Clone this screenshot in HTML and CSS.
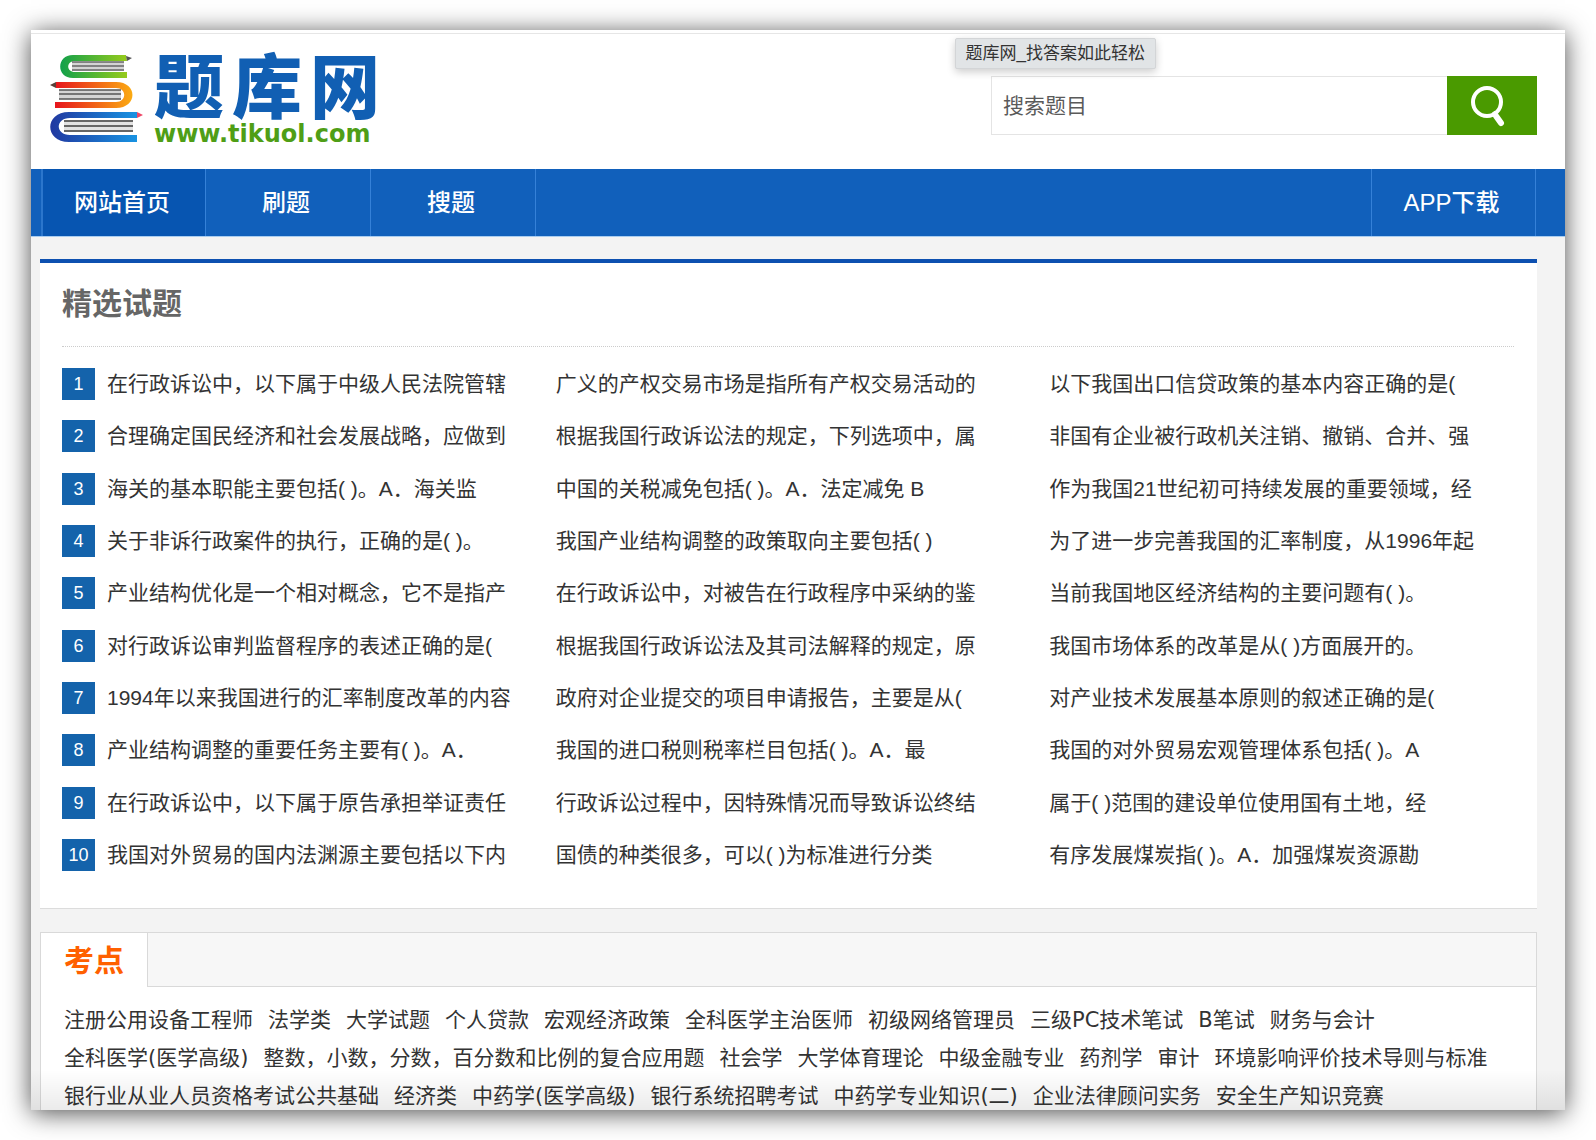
FILE: index.html
```html
<!DOCTYPE html>
<html lang="zh-CN">
<head>
<meta charset="utf-8">
<meta name="viewport" content="width=device-width, initial-scale=1">
<title>题库网_找答案如此轻松</title>
<link rel="stylesheet" href="styles.css">
</head>
<body>
<div class="window">
  <header class="header">
    <a class="logo" href="#">
      <svg class="logo-books" viewBox="0 0 96 90" width="96" height="90" aria-hidden="true">
        <defs>
          <linearGradient id="green" x1="0" x2="1"><stop offset="0" stop-color="#12a04a"/><stop offset="1" stop-color="#96cb1c"/></linearGradient>
          <linearGradient id="red" x1="0" x2="1"><stop offset="0" stop-color="#e6141c"/><stop offset="1" stop-color="#fbab12"/></linearGradient>
          <linearGradient id="blue" x1="0" x2="1"><stop offset="0" stop-color="#2138a0"/><stop offset="1" stop-color="#1893e2"/></linearGradient>
        </defs>
        <path fill="url(#green)" d="M77 0H24C7 0 7 23 24 23H78V17H26C17 17 17 6 26 6H78Z"/>
        <path fill="#555" d="M77 1L83 3L78 6Z"/>
        <path fill="#d4d4d4" d="M23 7H75V16H23Z"/>
        <path stroke="#666" stroke-width="1.5" d="M23 7H75M23 11H75M23 15H75"/>
        <path fill="url(#red)" d="M7 27H67C89 27 89 53 67 53H6V47H67C78 47 78 33 67 33H7Z"/>
        <path fill="#5a4038" d="M7 27L1 30L7 33Z"/>
        <path fill="#d4d4d4" d="M10 35H72V44H10Z"/>
        <path stroke="#555" stroke-width="1.5" d="M10 35H72M10 39H72M10 44H72"/>
        <path fill="url(#blue)" d="M88 57H20C-5 57-5 87 20 87H88V80H21C6 80 6 63 21 63H88Z"/>
        <path fill="#ee4868" d="M88 57L94 60L88 63Z"/>
        <path fill="#e2e2e2" d="M15 66H84V77H15Z"/>
        <path stroke="#666" stroke-width="1.8" d="M15 66H84M15 71H84M15 76H84"/>
      </svg>
      <span class="logo-words">
        <span class="logo-name"><span>题</span><span>库</span><span>网</span></span>
        <span class="logo-domain">www.tikuol.com</span>
      </span>
    </a>
    <form class="search">
      <input class="search-input" type="text" placeholder="搜索题目" aria-label="搜索题目">
      <button class="search-button" type="button" aria-label="搜索">
        <svg viewBox="0 0 36 44" width="36" height="44" aria-hidden="true">
          <circle cx="17" cy="18" r="14" fill="none" stroke="#fff" stroke-width="4"/>
          <path d="M26 32L31 39" stroke="#fff" stroke-width="6" stroke-linecap="round"/>
          <path d="M23 28L26 32" stroke="#fff" stroke-width="4"/>
        </svg>
      </button>
    </form>
    <div class="tooltip" role="tooltip">题库网_找答案如此轻松</div>
  </header>

  <nav class="nav">
    <a class="nav-item nav-item-active" href="#">网站首页</a>
    <a class="nav-item" href="#">刷题</a>
    <a class="nav-item" href="#">搜题</a>
    <a class="nav-item nav-item-app" href="#">APP下载</a>
  </nav>

  <main class="main">
    <section class="featured">
      <h2 class="featured-title">精选试题</h2>
      <ol class="rows">
        <li class="row"><span class="cell"><span class="badge">1</span><a href="#">在行政诉讼中，以下属于中级人民法院管辖</a></span><a href="#">广义的产权交易市场是指所有产权交易活动的</a><a href="#">以下我国出口信贷政策的基本内容正确的是(</a></li>
        <li class="row"><span class="cell"><span class="badge">2</span><a href="#">合理确定国民经济和社会发展战略，应做到</a></span><a href="#">根据我国行政诉讼法的规定，下列选项中，属</a><a href="#">非国有企业被行政机关注销、撤销、合并、强</a></li>
        <li class="row"><span class="cell"><span class="badge">3</span><a href="#">海关的基本职能主要包括( )。A．海关监</a></span><a href="#">中国的关税减免包括( )。A．法定减免 B</a><a href="#">作为我国21世纪初可持续发展的重要领域，经</a></li>
        <li class="row"><span class="cell"><span class="badge">4</span><a href="#">关于非诉行政案件的执行，正确的是( )。</a></span><a href="#">我国产业结构调整的政策取向主要包括( )</a><a href="#">为了进一步完善我国的汇率制度，从1996年起</a></li>
        <li class="row"><span class="cell"><span class="badge">5</span><a href="#">产业结构优化是一个相对概念，它不是指产</a></span><a href="#">在行政诉讼中，对被告在行政程序中采纳的鉴</a><a href="#">当前我国地区经济结构的主要问题有( )。</a></li>
        <li class="row"><span class="cell"><span class="badge">6</span><a href="#">对行政诉讼审判监督程序的表述正确的是(</a></span><a href="#">根据我国行政诉讼法及其司法解释的规定，原</a><a href="#">我国市场体系的改革是从( )方面展开的。</a></li>
        <li class="row"><span class="cell"><span class="badge">7</span><a href="#">1994年以来我国进行的汇率制度改革的内容</a></span><a href="#">政府对企业提交的项目申请报告，主要是从(</a><a href="#">对产业技术发展基本原则的叙述正确的是(</a></li>
        <li class="row"><span class="cell"><span class="badge">8</span><a href="#">产业结构调整的重要任务主要有( )。A．</a></span><a href="#">我国的进口税则税率栏目包括( )。A．最</a><a href="#">我国的对外贸易宏观管理体系包括( )。A</a></li>
        <li class="row"><span class="cell"><span class="badge">9</span><a href="#">在行政诉讼中，以下属于原告承担举证责任</a></span><a href="#">行政诉讼过程中，因特殊情况而导致诉讼终结</a><a href="#">属于( )范围的建设单位使用国有土地，经</a></li>
        <li class="row"><span class="cell"><span class="badge">10</span><a href="#">我国对外贸易的国内法渊源主要包括以下内</a></span><a href="#">国债的种类很多，可以( )为标准进行分类</a><a href="#">有序发展煤炭指( )。A．加强煤炭资源勘</a></li>
      </ol>
    </section>

    <section class="topics">
      <div class="tabs"><h2 class="tab">考点</h2></div>
      <div class="topic-list">
        <a href="#">注册公用设备工程师</a>
        <a href="#">法学类</a>
        <a href="#">大学试题</a>
        <a href="#">个人贷款</a>
        <a href="#">宏观经济政策</a>
        <a href="#">全科医学主治医师</a>
        <a href="#">初级网络管理员</a>
        <a href="#">三级PC技术笔试</a>
        <a href="#">B笔试</a>
        <a href="#">财务与会计</a>
        <a href="#">全科医学(医学高级)</a>
        <a href="#">整数，小数，分数，百分数和比例的复合应用题</a>
        <a href="#">社会学</a>
        <a href="#">大学体育理论</a>
        <a href="#">中级金融专业</a>
        <a href="#">药剂学</a>
        <a href="#">审计</a>
        <a href="#">环境影响评价技术导则与标准</a>
        <a href="#">银行业从业人员资格考试公共基础</a>
        <a href="#">经济类</a>
        <a href="#">中药学(医学高级)</a>
        <a href="#">银行系统招聘考试</a>
        <a href="#">中药学专业知识(二)</a>
        <a href="#">企业法律顾问实务</a>
        <a href="#">安全生产知识竞赛</a>
      </div>
    </section>
  </main>
</div>
</body>
</html>
```
FILE: styles.css
```css
* {
  box-sizing: border-box;
}

body {
  margin: 0;
  padding: 30px 31px;
  background: #fff;
  color: #333;
  font-family: "Liberation Sans", "Noto Sans CJK SC", sans-serif;
  font-size: 21px;
}

a {
  color: inherit;
  text-decoration: none;
}

h2,
ol {
  margin: 0;
  padding: 0;
}

.window {
  position: relative;
  height: calc(100vh - 60px);
  overflow: hidden;
  background: #f3f3f3;
  box-shadow: 0 3px 24px rgba(0, 0, 0, 0.7);
}

/* soft shade along the bottom edge */
.window::after {
  content: "";
  position: absolute;
  inset: auto 0 0 0;
  height: 40px;
  background: linear-gradient(rgba(0, 0, 0, 0), rgba(0, 0, 0, 0.08));
  pointer-events: none;
}

/* header */
.header {
  position: relative;
  display: flex;
  justify-content: space-between;
  align-items: flex-start;
  height: 139px;
  padding: 0 28px 0 18px;
  background: linear-gradient(#e6e6e6, #e6e6e6) 0 3px / 100% 1px no-repeat #fff;
}

.logo {
  display: flex;
  gap: 9px;
  padding-top: 25px;
}

.logo-words {
  display: flex;
  flex-direction: column;
}

.logo-name {
  display: flex;
  gap: 8px;
  color: #115fb3;
  font-family: "Noto Sans CJK SC", sans-serif;
  font-size: 70px;
  font-weight: 900;
  line-height: 56px;
}

.logo-domain {
  margin-top: 8px;
  color: #4f9e16;
  font-family: "DejaVu Sans", sans-serif;
  font-size: 24px;
  font-weight: 700;
  line-height: 30px;
}

.search {
  display: flex;
  width: 546px;
  height: 59px;
  margin-top: 46px;
}

.search-input {
  flex: 1;
  min-width: 0;
  padding: 0 11px;
  border: 1px solid #e4e4e4;
  border-right: 0;
  background: #fff;
  color: #333;
  font: inherit;
}

.search-input::placeholder {
  color: #5a5a5a;
  opacity: 1;
}

.search-button {
  width: 90px;
  padding: 0 8px 0 0;
  border: 0;
  background: #4a9a00;
}

.search-button svg {
  display: block;
  margin: 0 auto;
}

.tooltip {
  position: absolute;
  top: 8px;
  right: 409px;
  padding: 1px 10px 0;
  border: 1px solid #d3d5d7;
  border-radius: 2px;
  background: #e1e4e6;
  box-shadow: 0 3px 8px rgba(0, 0, 0, 0.2);
  font-size: 17px;
  line-height: 28px;
}

/* navigation */
.nav {
  display: flex;
  height: 68px;
  padding: 0 29px 0 10px;
  border-bottom: 1px solid #a9cdf0;
  background: #1160bb;
}

.nav-item {
  width: 165px;
  padding-right: 4px;
  border-right: 1px solid #3581d8;
  color: #fff;
  font-size: 24px;
  font-weight: 500;
  line-height: 67px;
  text-align: center;
}

.nav-item-active {
  border-left: 2px solid #2b76cc;
  background: #0755b1;
}

.nav-item-app {
  margin-left: auto;
  border-left: 1px solid #3581d8;
}

/* content */
.main {
  display: flex;
  flex-direction: column;
  gap: 23px;
  padding: 22px 28px 0 9px;
}

.featured {
  padding: 0 23px 37px 22px;
  border-top: 4px solid #0d50b0;
  border-bottom: 1px solid #dcdcdc;
  background: #fff;
}

.featured-title {
  height: 84px;
  border-bottom: 1px dotted #ccc;
  color: #666;
  font-size: 30px;
  line-height: 82px;
}

.rows {
  display: flex;
  flex-direction: column;
  justify-content: space-between;
  min-height: 503px;
  margin-top: 21px;
  list-style: none;
}

.row {
  display: grid;
  grid-template-columns: 34fr 34fr 32fr;
  line-height: 32px;
  white-space: nowrap;
}

.cell {
  display: flex;
  gap: 12px;
}

.badge {
  width: 33px;
  background: #1463ab;
  color: #fff;
  font-size: 18px;
  text-align: center;
}

.topics {
  border: 1px solid #d9d9d9;
  background: #fff;
}

.tabs {
  display: flex;
  height: 54px;
  border-bottom: 1px solid #d9d9d9;
  background: #f7f7f7;
}

.tab {
  height: 54px;
  padding: 0 23px;
  border-right: 1px solid #d9d9d9;
  background: #fff;
  color: #ff6000;
  font-size: 30px;
  line-height: 56px;
}

.topic-list {
  display: flex;
  flex-wrap: wrap;
  column-gap: 15px;
  padding: 14px 23px;
  font-family: "DejaVu Sans", "Noto Sans CJK SC", sans-serif;
  line-height: 38px;
}
```
